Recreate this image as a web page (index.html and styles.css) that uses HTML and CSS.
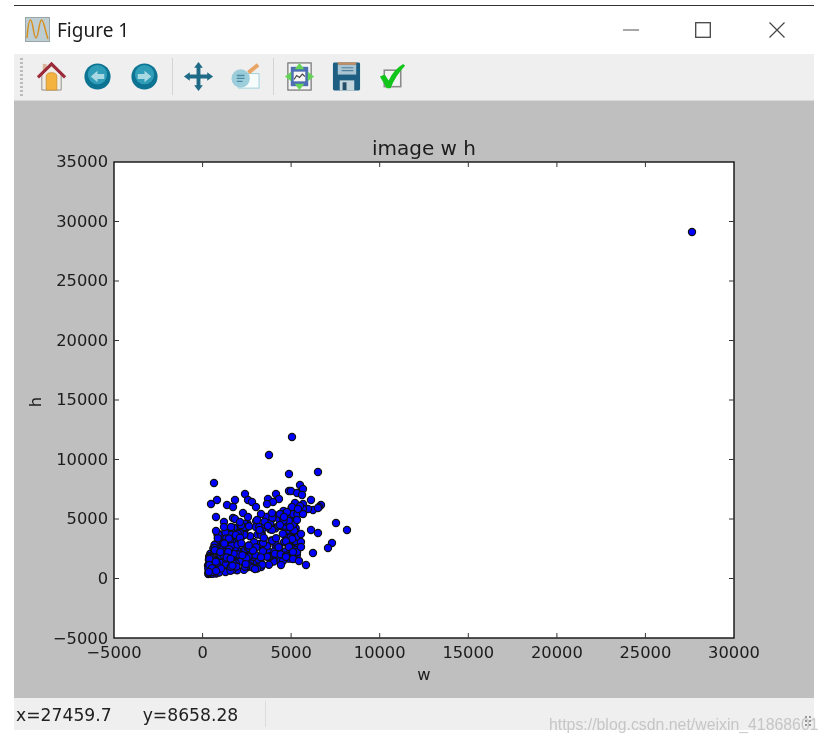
FILE: index.html
```html
<!DOCTYPE html>
<html lang="en">
<head>
    <meta charset="UTF-8">
    <title>Figure 1</title>
    <link rel="stylesheet" href="styles.css">
</head>
<body>
    <section class="window">
        <header class="titleBar">
            <svg class="appIcon" viewBox="0 0 25 25">
                <rect x="0.5" y="0.5" width="24" height="24" fill="#bccdd3" stroke="#9aa5a8"/>
                <path d="M2 21C3 8 4 3 5.500 3C8 3 8.500 21 11 21C13.500 21 14 3 16.500 3C19 3 20 14 23 22" fill="none" stroke="#d98f1e" stroke-width="1.5"/>
            </svg>
            <span class="titleText">Figure 1</span>
            <div class="controls">
                <button class="ctrl">
                    <svg viewBox="0 0 16 16"><path d="M0 8H16" stroke="#777" stroke-width="1.3"/></svg>
                </button>
                <button class="ctrl">
                    <svg viewBox="0 0 16 16"><rect x="0.7" y="0.7" width="14.6" height="14.6" fill="none" stroke="#444" stroke-width="1.3"/></svg>
                </button>
                <button class="ctrl last">
                    <svg viewBox="0 0 16 16"><path d="M0.5 0.5L15.5 15.5M15.5 0.5L0.5 15.5" stroke="#444" stroke-width="1.2"/></svg>
                </button>
            </div>
        </header>

        <nav class="toolbar">
            <div class="grip"></div>
            <!-- home -->
            <div class="tool">
                <svg viewBox="0 0 32 32">
                    <rect x="7" y="3" width="4" height="8" fill="#d8b49c"/>
                    <path d="M6 14L16 5L26 14V30H6Z" fill="#f1ece6" stroke="#8f8f8a"/>
                    <path d="M10.500 30V16Q10.500 12 16 12Q21.500 12 21.500 16V30Z" fill="#f4b33f" stroke="#c88d30" stroke-width="0.8"/>
                    <path d="M2 17L16 3L30 17" fill="none" stroke="#9c2a39" stroke-width="3.200"/>
                </svg>
            </div>
            <!-- back -->
            <div class="tool">
                <svg viewBox="0 0 32 32">
                    <circle cx="16" cy="16" r="13.5" fill="#0c7392"/>
                    <circle cx="16" cy="14" r="10" fill="#2f9db8"/>
                    <path d="M9 16L16 10V13.500H23V18.500H16V22Z" fill="#a8d8e2"/>
                </svg>
            </div>
            <!-- forward -->
            <div class="tool">
                <svg viewBox="0 0 32 32">
                    <circle cx="16" cy="16" r="13.5" fill="#0c7392"/>
                    <circle cx="16" cy="14" r="10" fill="#2f9db8"/>
                    <path d="M23 16L16 10V13.500H9V18.500H16V22Z" fill="#a8d8e2"/>
                </svg>
            </div>
            <div class="sep"></div>
            <!-- move -->
            <div class="tool">
                <svg viewBox="0 0 32 32">
                    <path d="M16 1L20.500 7H18V14H25V11.500L31 16L25 20.500V18H18V25H20.500L16 31L11.500 25H14V18H7V20.500L1 16L7 11.500V14H14V7H11.500Z" fill="#1f6a87"/>
                </svg>
            </div>
            <!-- zoom to rect -->
            <div class="tool">
                <svg viewBox="0 0 32 32">
                    <rect x="9" y="13" width="21" height="15" fill="#f6fbfc" stroke="#9fd0dc"/>
                    <path d="M19 12L29 4" stroke="#e8a565" stroke-width="4"/>
                    <circle cx="11" cy="18" r="9.5" fill="#93c9d8" fill-opacity="0.9"/>
                    <path d="M7 15H15M7 18H15M7 21H13" stroke="#4c8ca2" stroke-width="1.4"/>
                </svg>
            </div>
            <div class="sep"></div>
            <!-- subplots -->
            <div class="tool">
                <svg viewBox="0 0 32 32">
                    <rect x="4" y="2" width="24" height="28" fill="#f4f4f4" stroke="#6f6f6f" stroke-width="1.200"/>
                    <rect x="7" y="6" width="18" height="20" fill="#4d6db4"/>
                    <rect x="10" y="11" width="12" height="10" fill="#f6f6f6"/>
                    <path d="M10.500 19L13 15L16 17L19 13.500L21.500 16" fill="none" stroke="#444" stroke-width="1.100"/>
                    <path d="M16 2L21 8.500H11ZM16 30L21 23.500H11ZM1 16L7.500 11V21ZM31 16L24.500 11V21Z" fill="#63d456"/>
                </svg>
            </div>
            <!-- save -->
            <div class="tool">
                <svg viewBox="0 0 32 32">
                    <path d="M2 3Q2 1.500 3.500 1.500H28.500Q30 1.500 30 3V29Q30 30.500 28.500 30.500H3.500Q2 30.500 2 29Z" fill="#1d5f82"/>
                    <rect x="7" y="1.500" width="19" height="2.500" fill="#c98c5e"/>
                    <rect x="7" y="4" width="19" height="10" fill="#a9c4d2"/>
                    <path d="M11 7H23M11 10H23" stroke="#54809a" stroke-width="1.2"/>
                    <rect x="9" y="20" width="15" height="10.500" fill="#c6d6de"/>
                    <rect x="12" y="22" width="4" height="8" fill="#244f68"/>
                </svg>
            </div>
            <!-- check -->
            <div class="tool">
                <svg viewBox="0 0 32 32">
                    <rect x="7.500" y="9.500" width="17" height="17" fill="#f3f3f3" stroke="#8a8a8a" stroke-width="1.600"/>
                    <path d="M3 16L8 14L12 20Q17 9 27 3L29 5Q20 14 14 28H10Z" fill="#12c51a"/>
                </svg>
            </div>
        </nav>

        <main class="canvas">
            <svg class="figure" viewBox="14 101 800 597">
                <rect class="axesBg" x="114" y="162" width="620" height="476"/>
                <g id="points"></g>
                <rect class="spine" x="114" y="162" width="620" height="476"/>
                <path class="ticks" d="M202.6 638v-5M291.1 638v-5M379.7 638v-5M468.3 638v-5M556.9 638v-5M645.4 638v-5
                    M202.6 162v5M291.1 162v5M379.7 162v5M468.3 162v5M556.9 162v5M645.400 162v5
                    M114 221.500h5M114 281h5M114 340.500h5M114 400h5M114 459.500h5M114 519h5M114 578.500h5
                    M734 221.500h-5M734 281h-5M734 340.500h-5M734 400h-5M734 459.500h-5M734 519h-5M734 578.500h-5"/>

                <text class="title" x="424" y="155">image w h</text>

                <g class="xLabels">
                    <text x="114" y="657.500">−5000</text>
                    <text x="202.600" y="657.500">0</text>
                    <text x="291.100" y="657.500">5000</text>
                    <text x="379.700" y="657.500">10000</text>
                    <text x="468.300" y="657.500">15000</text>
                    <text x="556.900" y="657.500">20000</text>
                    <text x="645.400" y="657.500">25000</text>
                    <text x="734" y="657.500">30000</text>
                </g>
                <g class="yLabels">
                    <text x="108" y="167">35000</text>
                    <text x="108" y="226.500">30000</text>
                    <text x="108" y="286">25000</text>
                    <text x="108" y="345.500">20000</text>
                    <text x="108" y="405">15000</text>
                    <text x="108" y="464.500">10000</text>
                    <text x="108" y="524">5000</text>
                    <text x="108" y="583.500">0</text>
                    <text x="108" y="643.500">−5000</text>
                </g>

                <text class="axisLabel" x="424" y="680">w</text>
                <text class="axisLabel" transform="translate(41 402) rotate(-90)">h</text>
            </svg>
        </main>

        <footer class="statusBar">
            <span class="coordX">x=27459.7</span>
            <span class="coordY">y=8658.28</span>
            <div class="statusSep"></div>
            <div class="sizeGrip"></div>
        </footer>
    </section>
    <div class="watermark">https://blog.csdn.net/weixin_41868601</div>

    <script src="figure.js"></script>
</body>
</html>
```

FILE: styles.css
```css
html,body{margin: 0;padding: 0;background: #fff;}
body{position: relative;height: 743px;overflow: hidden;}

.window{
    width: 800px;
    margin: 5px 0 0 14px;
    border-top: 1.5px solid #333;
}

.titleBar{
    height: 47.5px;
    background: #fff;
    display: flex;
    align-items: center;
    padding-left: 11px;
}
.appIcon{width: 25px;height: 25px;filter: blur(.4px);}
.titleText{
    margin-left: 7px;
    font: 19px "Noto Sans", sans-serif;
    color: #1a1a1a;
    filter: blur(.3px);
}
.controls{margin-left: auto;display: flex;}
.ctrl{
    width: 72px;
    height: 47px;
    padding: 0;
    border: 0;
    background: none;
    display: flex;
    align-items: center;
    justify-content: center;
}
.ctrl.last{width: 75px;}
.ctrl svg{width: 16px;height: 16px;}

.toolbar{
    height: 46px;
    background: #efefef;
    border-bottom: 1px solid #d8d8d8;
    display: flex;
    align-items: center;
    padding-left: 14px;
}
.grip{
    width: 3px;
    height: 38px;
    background: repeating-linear-gradient(#bbb 0 2px, transparent 2px 4px);
    margin-left: -8px;
    margin-right: 5px;
}
.tool{
    width: 46.5px;
    height: 36px;
    display: flex;
    align-items: center;
    justify-content: center;
}
.tool svg{width: 31px;height: 31px;filter: blur(.5px);}
.sep{
    width: 1px;
    height: 37px;
    background: #d4d4d4;
    margin: 0 2.5px 0 4.500px;
}

.canvas{height: 597px;background: #bfbfbf;}
.figure{display: block;width: 800px;height: 597px;filter: blur(.45px);}
.figure text{font-family: "DejaVu Sans", sans-serif;fill: #1c1c1c;}
.axesBg{fill: #fff;}
.spine{fill: none;stroke: #111;stroke-width: 1.4;}
.ticks{fill: none;stroke: #333;stroke-width: 1;}
.title{font-size: 20px;text-anchor: middle;}
.xLabels text{font-size: 16.300px;text-anchor: middle;}
.yLabels text{font-size: 16.300px;text-anchor: end;}
.axisLabel{font-size: 16.300px;text-anchor: middle;}
.point{fill: #0000ff;stroke: #111;stroke-width: 1.200;}

.statusBar{
    height: 29px;
    padding-top: 3px;
    background: #efefef;
    display: flex;
    align-items: center;
    font: 17.200px "DejaVu Sans", sans-serif;
    color: #222;
}
.coordX{margin-left: 2px;filter: blur(.3px);}
.coordY{margin-left: 31px;filter: blur(.3px);}
.statusSep{width: 1px;height: 26px;background: #dcdcdc;margin: -3px 0 0 27px;}
.sizeGrip{
    width: 8px;
    height: 12px;
    margin: 11px 2px 0 auto;
    background: radial-gradient(circle, #999 1px, transparent 1.2px) 0 0/4px 4px;
}

.watermark{
    position: absolute;
    left: 549px;
    top: 716px;
    font: 15.850px "Liberation Sans", sans-serif;
    color: rgba(170,170,170,.6);
    white-space: nowrap;
    filter: blur(.4px);
}
```

FILE: figure.js
```js
// scatter of the image sizes, in page pixels
var svgNs = "http://www.w3.org/2000/svg";
var group = document.querySelector("#points");

var scattered = [
    [692,232],[292,437],[269,455],[289,474],[318,472],[214,483],[300,485],[289,491],[291,491],
    [303,489],[297,493],[302,495],[276,494],[245,494],[268,499],[279,499],[273,502],[248,500],
    [252,502],[235,500],[217,500],[211,504],[227,505],[233,507],[256,507],[267,504],[295,503],
    [292,507],[311,500],[303,504],[321,505],[319,507],[313,510],[318,508],[308,509],[303,509],
    [303,514],[243,513],[216,517],[233,518],[235,519],[261,514],[272,513],[280,514],[287,512],
    [300,506],[336,523],[347,530],[311,530],[318,533],[332,543],[328,548],[313,553],[301,534],
    [301,542],[301,547],[289,547],[293,552],[286,557],[293,559],[299,561],[306,565],[281,565],
    [255,569],[224,522],[240,522],[224,527],[231,527],[216,531],[298,509],[284,517],[297,520],
    [290,527],[280,525],[268,526],[257,520],[248,517]
];

// lower bound and upper bound of the dense cloud, read off the picture
function topY(x){
    if(x < 218) return 562 - (x-207)*2.7;
    if(x < 245) return 532 - (x-218)*.35;
    return 522 - (x-245)*.32;
}
function botY(x){
    if(x < 255) return 575 - (x-207)*.1;
    return 570 - (x-255)*.3;
}

// fixed seed so the picture is the same on every load
var seed = 41;
function rnd(){
    seed = (seed*16807)%2147483647;
    return seed/2147483647;
}

var dense = [];
while(dense.length < 300){
    var x = 208 + Math.pow(rnd(),1.15)*90;
    var y = topY(x) + rnd()*(botY(x)-topY(x));
    dense.push([x,y]);
}

dense.concat(scattered).forEach(function(p){
    var c = document.createElementNS(svgNs,"circle");
    c.setAttribute("class","point");
    c.setAttribute("cx",p[0]);
    c.setAttribute("cy",p[1]);
    c.setAttribute("r",3.6);
    group.appendChild(c);
});
```
